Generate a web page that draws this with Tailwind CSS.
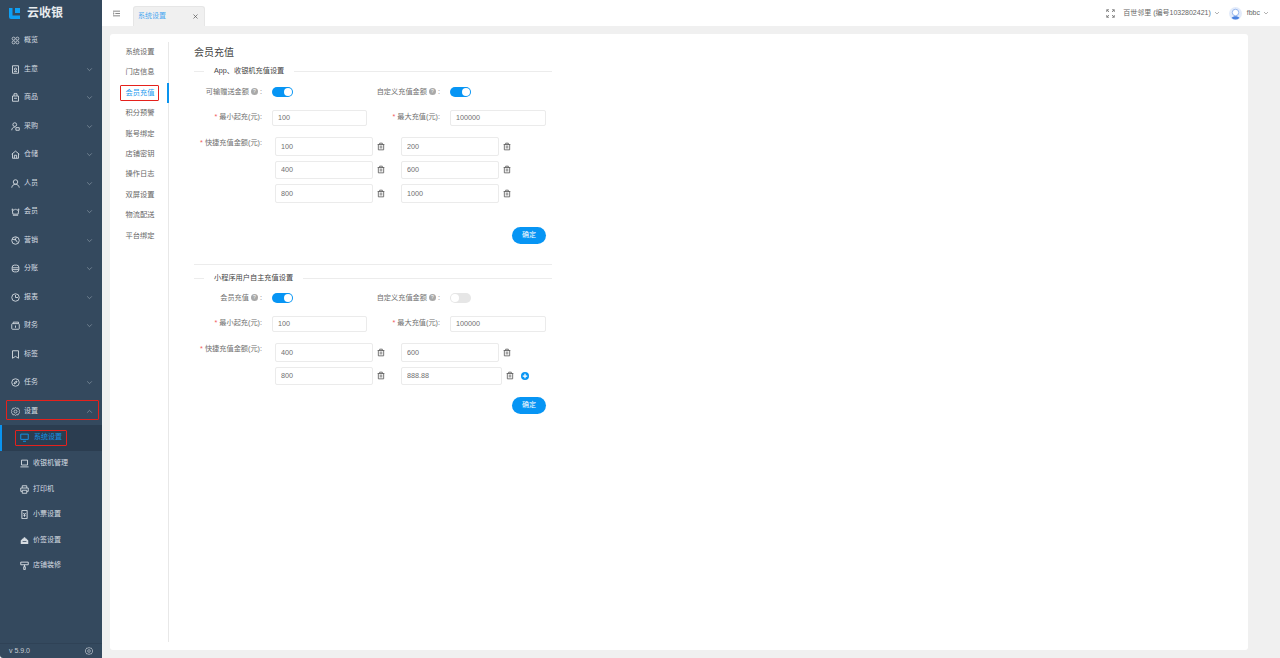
<!DOCTYPE html>
<html lang="en">
<head>
    <meta charset="UTF-8">
    <meta name="viewport" content="width=device-width, initial-scale=1.0">
    <title>会员充值</title>
    <script src="https://cdn.jsdelivr.net/npm/@tailwindcss/browser@4"></script>
</head>
<body class="font-['Liberation_Sans','Noto_Sans_CJK_SC',sans-serif] bg-white">
    <!-- shared icons -->
    <svg class="hidden">
        <symbol id="chev" viewBox="0 0 12 12"><path d="M2 4l4 4 4-4" fill="none" stroke="currentColor" stroke-width="1"/></symbol>
        <symbol id="trash" viewBox="0 0 24 24"><path d="M2 6h20M8 6V2h8v4M4 6v16h16V6M8 11h8M8 16h8" fill="none" stroke="currentColor" stroke-width="2.4"/></symbol>
        <symbol id="gear" viewBox="0 0 24 24"><path d="M12 1l3 2.6 3.9-.6 1.4 3.7 3.2 2.3L22 12l1.500 3-3.200 2.300-1.400 3.700-3.900-.6L12 23l-3-2.600-3.900.6-1.400-3.700L.5 15 2 12 .5 9l3.200-2.300L5.100 3 9 3.600z" fill="none" stroke="currentColor" stroke-width="2"/><circle cx="12" cy="12" r="4" fill="none" stroke="currentColor" stroke-width="2"/></symbol>
    </svg>

    <div class="flex h-[658px] w-[1280px] overflow-hidden">
        <!-- sidebar -->
        <aside class="relative flex h-full w-[102px] shrink-0 flex-col rounded-bl-[3px] bg-[#34495e] text-[7px] text-[#d5dbe1]">
            <div class="flex h-[26.25px] shrink-0 items-center pl-[9px]">
                <svg class="h-[11px] w-[11px]" viewBox="0 0 11 11"><path d="M0 0h3.500v7.500H11V11H2a2 2 0 0 1-2-2z" fill="#0ea0f5"/><path d="M6 0h5v5H6z" fill="#0ea0f5"/></svg>
                <span class="ml-[7px] text-[12px] font-bold text-[#e8ecef]">云收银</span>
            </div>

            <a class="flex h-[28.5px] items-center pl-[11px]"><svg class="h-[9px] w-[9px]" viewBox="0 0 24 24" fill="none" stroke="currentColor" stroke-width="2"><circle cx="7" cy="7" r="4"/><circle cx="17" cy="7" r="4"/><circle cx="7" cy="17" r="4"/><circle cx="17" cy="17" r="4"/></svg><span class="ml-[4px]">概览</span></a>
            <a class="flex h-[28.5px] items-center pl-[11px]"><svg class="h-[9px] w-[9px]" viewBox="0 0 24 24" fill="none" stroke="currentColor" stroke-width="2.4"><path d="M4 2h16v20H4z"/><circle cx="12" cy="11" r="3"/><path d="M8 17h8"/></svg><span class="ml-[4px]">生意</span><svg class="ml-auto mr-[9px] h-[7px] w-[7px] text-[#9aa7b4]"><use href="#chev"/></svg></a>
            <a class="flex h-[28.5px] items-center pl-[11px]"><svg class="h-[9px] w-[9px]" viewBox="0 0 24 24" fill="none" stroke="currentColor" stroke-width="2.4"><path d="M4 8h16v14H4zM8 8V2h8v6M8 14h8"/></svg><span class="ml-[4px]">商品</span><svg class="ml-auto mr-[9px] h-[7px] w-[7px] text-[#9aa7b4]"><use href="#chev"/></svg></a>
            <a class="flex h-[28.5px] items-center pl-[11px]"><svg class="h-[9px] w-[9px]" viewBox="0 0 24 24" fill="none" stroke="currentColor" stroke-width="2.4"><circle cx="10" cy="7" r="5"/><path d="M2 22c0-5 3-8 8-8M13 15h9v7h-9z"/></svg><span class="ml-[4px]">采购</span><svg class="ml-auto mr-[9px] h-[7px] w-[7px] text-[#9aa7b4]"><use href="#chev"/></svg></a>
            <a class="flex h-[28.5px] items-center pl-[11px]"><svg class="h-[9px] w-[9px]" viewBox="0 0 24 24" fill="none" stroke="currentColor" stroke-width="2.4"><path d="M2 11l10-8 10 8M4 10v12h16V10M9 22v-8h6v8"/></svg><span class="ml-[4px]">仓储</span><svg class="ml-auto mr-[9px] h-[7px] w-[7px] text-[#9aa7b4]"><use href="#chev"/></svg></a>
            <a class="flex h-[28.5px] items-center pl-[11px]"><svg class="h-[9px] w-[9px]" viewBox="0 0 24 24" fill="none" stroke="currentColor" stroke-width="2.4"><circle cx="12" cy="8" r="6"/><path d="M2 23c1-6 5-9 10-9s9 3 10 9"/></svg><span class="ml-[4px]">人员</span><svg class="ml-auto mr-[9px] h-[7px] w-[7px] text-[#9aa7b4]"><use href="#chev"/></svg></a>
            <a class="flex h-[28.5px] items-center pl-[11px]"><svg class="h-[9px] w-[9px]" viewBox="0 0 24 24" fill="none" stroke="currentColor" stroke-width="2.4"><path d="M3 5l5 4 4-4 4 4 5-4-2 14H5zM5 22h14"/></svg><span class="ml-[4px]">会员</span><svg class="ml-auto mr-[9px] h-[7px] w-[7px] text-[#9aa7b4]"><use href="#chev"/></svg></a>
            <a class="flex h-[28.5px] items-center pl-[11px]"><svg class="h-[9px] w-[9px]" viewBox="0 0 24 24" fill="none" stroke="currentColor" stroke-width="2.4"><circle cx="12" cy="12" r="10"/><path d="M3 9h9l5 8M14 3l-3 9"/></svg><span class="ml-[4px]">营销</span><svg class="ml-auto mr-[9px] h-[7px] w-[7px] text-[#9aa7b4]"><use href="#chev"/></svg></a>
            <a class="flex h-[28.5px] items-center pl-[11px]"><svg class="h-[9px] w-[9px]" viewBox="0 0 24 24" fill="none" stroke="currentColor" stroke-width="2.4"><rect x="3" y="3" width="18" height="18" rx="6"/><path d="M3 10h18M3 15h18"/></svg><span class="ml-[4px]">分账</span><svg class="ml-auto mr-[9px] h-[7px] w-[7px] text-[#9aa7b4]"><use href="#chev"/></svg></a>
            <a class="flex h-[28.5px] items-center pl-[11px]"><svg class="h-[9px] w-[9px]" viewBox="0 0 24 24" fill="none" stroke="currentColor" stroke-width="2.4"><circle cx="12" cy="12" r="10"/><path d="M12 5v7h7"/></svg><span class="ml-[4px]">报表</span><svg class="ml-auto mr-[9px] h-[7px] w-[7px] text-[#9aa7b4]"><use href="#chev"/></svg></a>
            <a class="flex h-[28.5px] items-center pl-[11px]"><svg class="h-[9px] w-[9px]" viewBox="0 0 24 24" fill="none" stroke="currentColor" stroke-width="2.4"><rect x="2" y="7" width="20" height="15" rx="2"/><path d="M6 7V3h14v4M12 12v6"/></svg><span class="ml-[4px]">财务</span><svg class="ml-auto mr-[9px] h-[7px] w-[7px] text-[#9aa7b4]"><use href="#chev"/></svg></a>
            <a class="flex h-[28.5px] items-center pl-[11px]"><svg class="h-[9px] w-[9px]" viewBox="0 0 24 24" fill="none" stroke="currentColor" stroke-width="2.4"><path d="M4 2h16v20l-8-5-8 5z"/></svg><span class="ml-[4px]">标签</span></a>
            <a class="flex h-[28.5px] items-center pl-[11px]"><svg class="h-[9px] w-[9px]" viewBox="0 0 24 24" fill="none" stroke="currentColor" stroke-width="2.4"><circle cx="12" cy="12" r="10"/><path d="M16 8l-6 3-2 5 6-3z"/></svg><span class="ml-[4px]">任务</span><svg class="ml-auto mr-[9px] h-[7px] w-[7px] text-[#9aa7b4]"><use href="#chev"/></svg></a>
            <a class="relative flex h-[28.5px] items-center pl-[11px]">
                <svg class="h-[9px] w-[9px]"><use href="#gear"/></svg><span class="ml-[4px]">设置</span><svg class="ml-auto mr-[9px] h-[7px] w-[7px] rotate-180 text-[#9aa7b4]"><use href="#chev"/></svg>
                <span class="absolute left-[6px] top-[3.5px] h-[20px] w-[93px] rounded-[1px] border-[1.5px] border-[#e5211c]"></span>
            </a>

            <a class="relative flex h-[25.5px] items-center border-l-2 border-[#0a93ee] bg-[#2b3d50] pb-[2px] pl-[18px] text-[#1492e6]">
                <svg class="h-[9px] w-[9px]" viewBox="0 0 24 24" fill="none" stroke="currentColor" stroke-width="2.6"><path d="M2 3h20v14H2zM8 22h8"/></svg><span class="ml-[5px]">系统设置</span>
                <span class="absolute left-[13px] top-[4.5px] h-[16px] w-[52px] rounded-[1px] border-[1.5px] border-[#e5211c]"></span>
            </a>
            <a class="flex h-[25.5px] items-center pl-[20px]"><svg class="h-[9px] w-[9px]" viewBox="0 0 24 24" fill="none" stroke="currentColor" stroke-width="2.4"><path d="M4 3h16v13H4zM1 21h22"/></svg><span class="ml-[4px]">收银机管理</span></a>
            <a class="flex h-[25.5px] items-center pl-[20px]"><svg class="h-[9px] w-[9px]" viewBox="0 0 24 24" fill="none" stroke="currentColor" stroke-width="2.4"><path d="M6 8V2h12v6M6 17H2V8h20v9h-4M6 14h12v8H6z"/></svg><span class="ml-[4px]">打印机</span></a>
            <a class="flex h-[25.5px] items-center pl-[20px]"><svg class="h-[9px] w-[9px]" viewBox="0 0 24 24" fill="none" stroke="currentColor" stroke-width="2.6"><path d="M5 1h14v22H5zM9 8l3 4 3-4M9 14h6M12 12v6"/></svg><span class="ml-[4px]">小票设置</span></a>
            <a class="flex h-[25.5px] items-center pl-[20px]"><svg class="h-[9px] w-[9px]" viewBox="0 0 24 24" fill="currentColor"><path d="M2 12l6-6h8l6 6v9H2zM10 3h4v3h-4z"/><path d="M7 14h10v2H7z" fill="#34495e"/></svg><span class="ml-[4px]">价签设置</span></a>
            <a class="flex h-[25.5px] items-center pl-[20px]"><svg class="h-[9px] w-[9px]" viewBox="0 0 24 24" fill="none" stroke="currentColor" stroke-width="2.6"><path d="M2 3h20v7H2zM12 10v5M10 15h4v8h-4z"/></svg><span class="ml-[4px]">店铺装修</span></a>

            <div class="mt-auto flex h-[15px] items-center justify-between border-t border-[#2f4256] pl-[9px] pr-[9px] text-[#c5ccd3]">
                <span>v 5.9.0</span>
                <svg class="h-[8px] w-[8px]"><use href="#gear"/></svg>
            </div>
        </aside>

        <div class="flex min-w-0 flex-1 flex-col bg-[#f0f0f0]">
            <!-- top bar -->
            <header class="flex h-[26px] shrink-0 items-end bg-white text-[7px] text-[#666]">
                <svg class="mb-[9px] ml-[11px] h-[7px] w-[7px] text-[#555]" viewBox="0 0 12 12" fill="none" stroke="currentColor" stroke-width="1.2"><path d="M0 2h12M4 6h8M0 10h12M0 4.500L2 6 0 7.500"/></svg>
                <div class="ml-[13px] flex h-[20px] w-[72px] items-center rounded-t-[3px] border border-b-0 border-[#e6e6e6] bg-[#f0f0f0] pl-[4px] pr-[6px]">
                    <span class="text-[#4aa8f0]">系统设置</span>
                    <svg class="ml-auto h-[5px] w-[5px] text-[#555]" viewBox="0 0 10 10" fill="none" stroke="currentColor" stroke-width="1.4"><path d="M1 1l8 8M9 1l-8 8"/></svg>
                </div>
                <div class="ml-auto flex h-[26px] items-center pr-[11px]">
                    <svg class="h-[9px] w-[9px] text-[#666]" viewBox="0 0 12 12" fill="none" stroke="currentColor" stroke-width="1"><path d="M1 4V1h3M8 1h3v3M11 8v3H8M4 11H1V8M1 1l3 3M11 1L8 4M11 11L8 8M1 11l3-3"/></svg>
                    <span class="ml-[8px]">百世邻里 (编号1032802421)</span>
                    <svg class="ml-[3px] h-[6px] w-[6px]"><use href="#chev"/></svg>
                    <svg class="ml-[9px] h-[13px] w-[13px]" viewBox="0 0 26 26"><circle cx="13" cy="13" r="13" fill="#e3ebfa"/><circle cx="13" cy="11" r="6.500" fill="#fff" stroke="#7aa3e8" stroke-width="1.500"/><path d="M5 22c3-5 13-5 16 0a13 13 0 0 1-16 0z" fill="#4a82e0"/></svg>
                    <span class="ml-[5px]">fbbc</span>
                    <svg class="ml-[3px] h-[6px] w-[6px]"><use href="#chev"/></svg>
                </div>
            </header>

            <!-- card -->
            <main class="ml-[8px] mr-[32px] mt-[8px] flex h-[616px] rounded-[3px] bg-white py-[8px]">
                <!-- inner menu -->
                <nav class="h-[600px] w-[59px] shrink-0 border-r border-[#e8e8e8] text-[7.25px] text-[#666]">
                    <a class="block h-[20.4px] pl-[15.5px] leading-[19.4px]">系统设置</a>
                    <a class="block h-[20.4px] pl-[15.5px] leading-[19.4px]">门店信息</a>
                    <a class="relative block h-[20.4px] w-[59px] border-r-2 border-[#0a93ee] pl-[15.5px] leading-[19.4px] text-[#1c9cf0]">会员充值<span class="absolute left-[10px] top-[2.5px] h-[16px] w-[39px] rounded-[1px] border-[1.5px] border-[#e5211c]"></span></a>
                    <a class="block h-[20.4px] pl-[15.5px] leading-[19.4px]">积分预警</a>
                    <a class="block h-[20.4px] pl-[15.5px] leading-[19.4px]">账号绑定</a>
                    <a class="block h-[20.4px] pl-[15.5px] leading-[19.4px]">店铺密钥</a>
                    <a class="block h-[20.4px] pl-[15.5px] leading-[19.4px]">操作日志</a>
                    <a class="block h-[20.4px] pl-[15.5px] leading-[19.4px]">双屏设置</a>
                    <a class="block h-[20.4px] pl-[15.5px] leading-[19.4px]">物流配送</a>
                    <a class="block h-[20.4px] pl-[15.5px] leading-[19.4px]">平台绑定</a>
                </nav>

                <!-- form -->
                <section class="ml-[25px] w-[358px] text-[7.2px] text-[#707070]">
                    <h2 class="h-[21px] text-[10px] leading-[22px] text-[#444]">会员充值</h2>

                    <div class="flex h-[16px] items-center text-[#444]">
                        <span class="h-px w-[10px] bg-[#ececec]"></span>
                        <span class="px-[10px]">App、收银机充值设置</span>
                        <span class="h-px flex-1 bg-[#ececec]"></span>
                    </div>

                    <div class="mt-[5px] flex h-[16px] items-center">
                        <div class="flex w-[178px] items-center">
                            <label class="flex w-[68px] items-center justify-end">可输赠送金额<span class="mx-[2px] flex h-[7px] w-[7px] items-center justify-center rounded-full bg-[#a9a9a9] text-[5px] text-white">?</span>:</label>
                            <span class="ml-[10px] flex h-[10px] w-[21px] items-center justify-end rounded-full bg-[#0795f4] pr-[1px]"><span class="h-[8px] w-[8px] rounded-full bg-white"></span></span>
                        </div>
                        <div class="flex items-center">
                            <label class="flex w-[68px] items-center justify-end">自定义充值金额<span class="mx-[2px] flex h-[7px] w-[7px] items-center justify-center rounded-full bg-[#a9a9a9] text-[5px] text-white">?</span>:</label>
                            <span class="ml-[10px] flex h-[10px] w-[21px] items-center justify-end rounded-full bg-[#0795f4] pr-[1px]"><span class="h-[8px] w-[8px] rounded-full bg-white"></span></span>
                        </div>
                    </div>

                    <div class="mt-[9.5px] flex h-[16px] items-center">
                        <div class="flex w-[178px] items-center">
                            <label class="w-[68px] text-right"><span class="text-[#f25c5c]">*</span> 最小起充(元):</label>
                            <input class="ml-[10px] h-[16px] w-[95px] rounded-[2px] border border-[#ebebeb] px-[5px] outline-none" value="100">
                        </div>
                        <div class="flex items-center">
                            <label class="w-[68px] text-right"><span class="text-[#f25c5c]">*</span> 最大充值(元):</label>
                            <input class="ml-[10px] h-[16px] w-[96px] rounded-[2px] border border-[#ebebeb] px-[5px] outline-none" value="100000">
                        </div>
                    </div>

                    <div class="mt-[11.5px] flex">
                        <label class="mt-[1px] w-[68px] whitespace-nowrap text-right"><span class="text-[#f25c5c]">*</span> 快捷充值金额(元):</label>
                        <div class="ml-[13px] flex flex-col gap-[5px]">
                            <div class="flex h-[18.5px] items-center">
                                <input class="h-full w-[98px] rounded-[2px] border border-[#ebebeb] px-[5px] outline-none" value="100">
                                <svg class="ml-[4px] h-[9px] w-[8px] text-[#555]"><use href="#trash"/></svg>
                                <input class="ml-[16px] h-full w-[98px] rounded-[2px] border border-[#ebebeb] px-[5px] outline-none" value="200">
                                <svg class="ml-[4px] h-[9px] w-[8px] text-[#555]"><use href="#trash"/></svg>
                            </div>
                            <div class="flex h-[18.5px] items-center">
                                <input class="h-full w-[98px] rounded-[2px] border border-[#ebebeb] px-[5px] outline-none" value="400">
                                <svg class="ml-[4px] h-[9px] w-[8px] text-[#555]"><use href="#trash"/></svg>
                                <input class="ml-[16px] h-full w-[98px] rounded-[2px] border border-[#ebebeb] px-[5px] outline-none" value="600">
                                <svg class="ml-[4px] h-[9px] w-[8px] text-[#555]"><use href="#trash"/></svg>
                            </div>
                            <div class="flex h-[18.5px] items-center">
                                <input class="h-full w-[98px] rounded-[2px] border border-[#ebebeb] px-[5px] outline-none" value="800">
                                <svg class="ml-[4px] h-[9px] w-[8px] text-[#555]"><use href="#trash"/></svg>
                                <input class="ml-[16px] h-full w-[98px] rounded-[2px] border border-[#ebebeb] px-[5px] outline-none" value="1000">
                                <svg class="ml-[4px] h-[9px] w-[8px] text-[#555]"><use href="#trash"/></svg>
                            </div>
                        </div>
                    </div>

                    <div class="mr-[6px] mt-[24px] flex justify-end">
                        <button class="h-[17px] w-[34px] rounded-full bg-[#0795f4] text-[7px] text-white">确定</button>
                    </div>

                    <div class="mt-[20px] h-px bg-[#ececec]"></div>

                    <div class="mt-[5.5px] flex h-[16px] items-center text-[#444]">
                        <span class="h-px w-[10px] bg-[#ececec]"></span>
                        <span class="px-[10px]">小程序用户自主充值设置</span>
                        <span class="h-px flex-1 bg-[#ececec]"></span>
                    </div>

                    <div class="mt-[4px] flex h-[16px] items-center">
                        <div class="flex w-[178px] items-center">
                            <label class="flex w-[68px] items-center justify-end">会员充值<span class="mx-[2px] flex h-[7px] w-[7px] items-center justify-center rounded-full bg-[#a9a9a9] text-[5px] text-white">?</span>:</label>
                            <span class="ml-[10px] flex h-[10px] w-[21px] items-center justify-end rounded-full bg-[#0795f4] pr-[1px]"><span class="h-[8px] w-[8px] rounded-full bg-white"></span></span>
                        </div>
                        <div class="flex items-center">
                            <label class="flex w-[68px] items-center justify-end">自定义充值金额<span class="mx-[2px] flex h-[7px] w-[7px] items-center justify-center rounded-full bg-[#a9a9a9] text-[5px] text-white">?</span>:</label>
                            <span class="ml-[10px] flex h-[10px] w-[21px] items-center justify-start rounded-full bg-[#e6e6e6] pl-[1px]"><span class="h-[8px] w-[8px] rounded-full bg-white"></span></span>
                        </div>
                    </div>

                    <div class="mt-[9.5px] flex h-[16px] items-center">
                        <div class="flex w-[178px] items-center">
                            <label class="w-[68px] text-right"><span class="text-[#f25c5c]">*</span> 最小起充(元):</label>
                            <input class="ml-[10px] h-[16px] w-[95px] rounded-[2px] border border-[#ebebeb] px-[5px] outline-none" value="100">
                        </div>
                        <div class="flex items-center">
                            <label class="w-[68px] text-right"><span class="text-[#f25c5c]">*</span> 最大充值(元):</label>
                            <input class="ml-[10px] h-[16px] w-[96px] rounded-[2px] border border-[#ebebeb] px-[5px] outline-none" value="100000">
                        </div>
                    </div>

                    <div class="mt-[11.5px] flex">
                        <label class="mt-[1px] w-[68px] whitespace-nowrap text-right"><span class="text-[#f25c5c]">*</span> 快捷充值金额(元):</label>
                        <div class="ml-[13px] flex flex-col gap-[5px]">
                            <div class="flex h-[18.5px] items-center">
                                <input class="h-full w-[98px] rounded-[2px] border border-[#ebebeb] px-[5px] outline-none" value="400">
                                <svg class="ml-[4px] h-[9px] w-[8px] text-[#555]"><use href="#trash"/></svg>
                                <input class="ml-[16px] h-full w-[98px] rounded-[2px] border border-[#ebebeb] px-[5px] outline-none" value="600">
                                <svg class="ml-[4px] h-[9px] w-[8px] text-[#555]"><use href="#trash"/></svg>
                            </div>
                            <div class="flex h-[18.5px] items-center">
                                <input class="h-full w-[98px] rounded-[2px] border border-[#ebebeb] px-[5px] outline-none" value="800">
                                <svg class="ml-[4px] h-[9px] w-[8px] text-[#555]"><use href="#trash"/></svg>
                                <input class="ml-[16px] h-full w-[101px] rounded-[2px] border border-[#ebebeb] px-[5px] outline-none" value="888.88">
                                <svg class="ml-[4px] h-[9px] w-[8px] text-[#555]"><use href="#trash"/></svg>
                                <svg class="ml-[7px] h-[8px] w-[8px]" viewBox="0 0 16 16"><circle cx="8" cy="8" r="8" fill="#0795f4"/><path d="M3.500 8h9M8 3.500v9" stroke="#fff" stroke-width="2.500"/></svg>
                            </div>
                        </div>
                    </div>

                    <div class="mr-[6px] mt-[11.5px] flex justify-end">
                        <button class="h-[17px] w-[34px] rounded-full bg-[#0795f4] text-[7px] text-white">确定</button>
                    </div>
                </section>
            </main>
        </div>
    </div>
</body>
</html>
